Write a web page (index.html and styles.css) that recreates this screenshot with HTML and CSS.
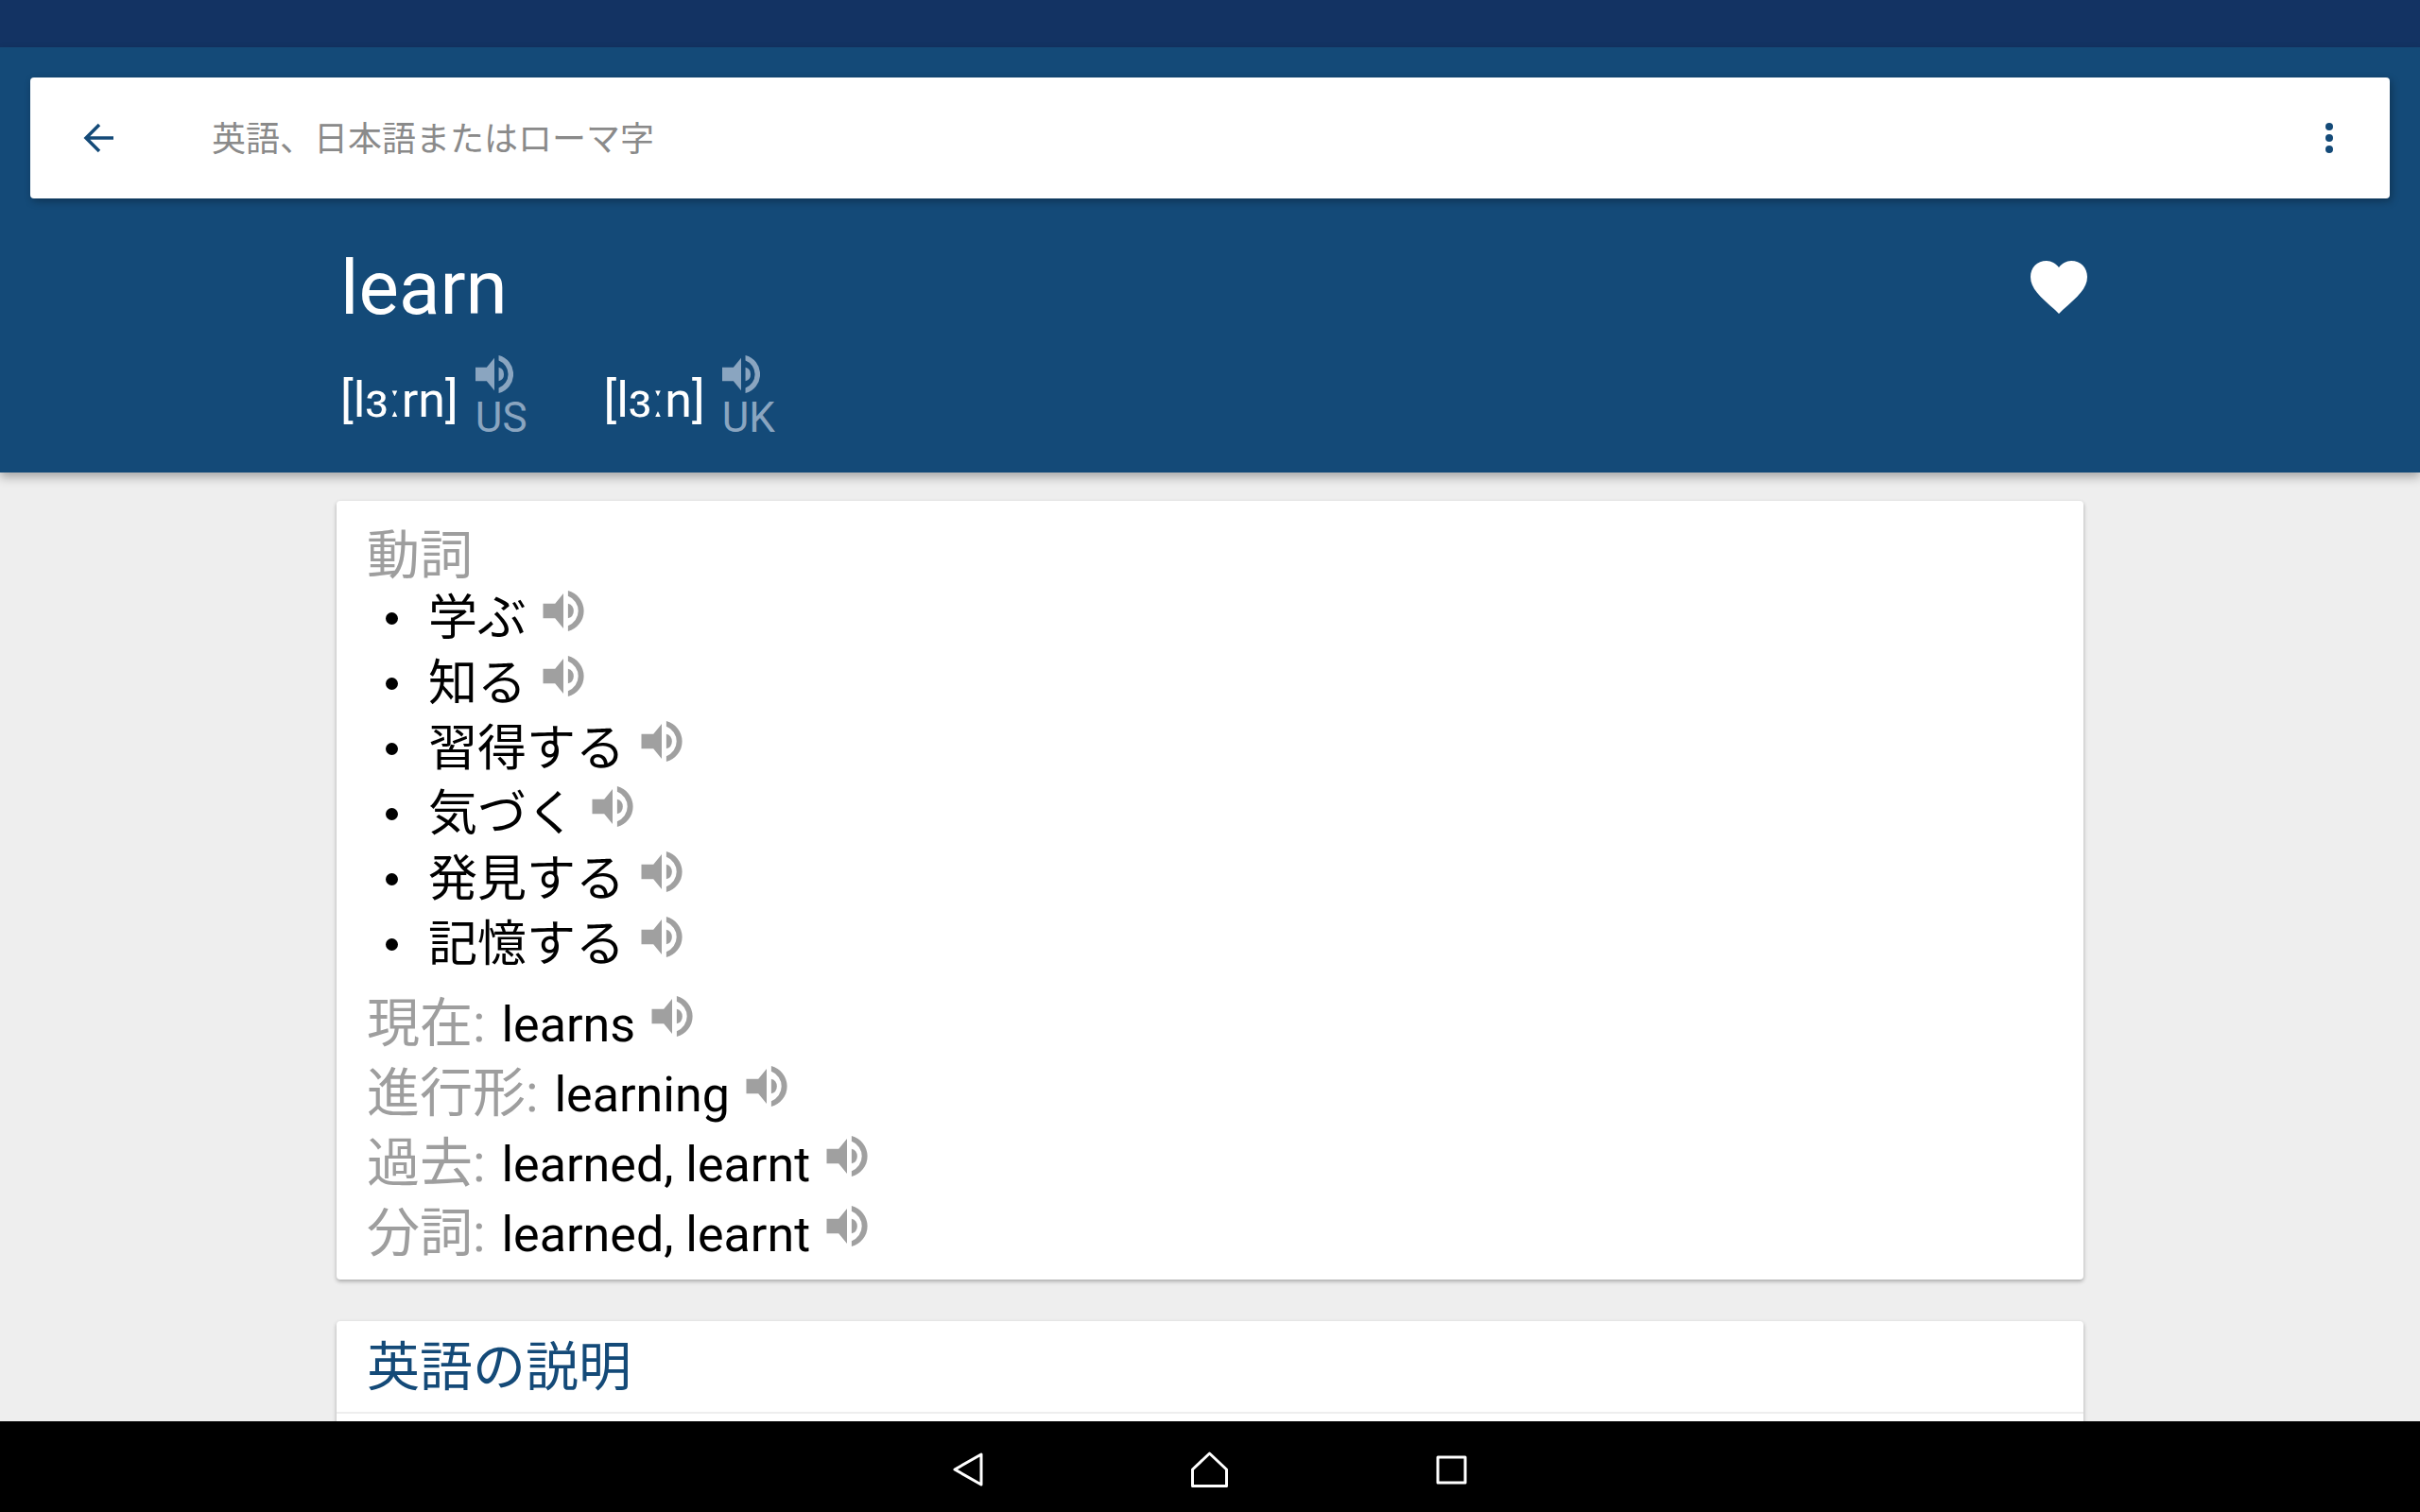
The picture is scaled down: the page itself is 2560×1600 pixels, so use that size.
FILE: index.html
```html
<!DOCTYPE html>
<html lang="ja">
<head>
    <meta charset="UTF-8">
    <title>learn</title>
    <link rel="stylesheet" href="styles.css">
</head>
<body>
    <svg class="defs" width="0" height="0">
        <symbol id="speaker" viewBox="0 0 44 44">
            <path d="M0 14H13L22 3V41L13 30H0Z"/>
            <path d="M27 14A8.3 8.3 0 0 1 27 30Z"/>
            <path d="M27 0A22.7 22.7 0 0 1 27 44V38A17.1 17.1 0 0 0 27 6Z"/>
        </symbol>
    </svg>

    <div class="status-bar"></div>

    <header class="header">
        <div class="search-bar">
            <svg class="back-icon" viewBox="0 0 32 32"><path d="M32 16H3M17 2L3 16L17 30"/></svg>
            <span class="search-hint">英語、日本語またはローマ字</span>
            <div class="menu-dots"><i></i><i></i><i></i></div>
        </div>
        <div class="word-head">
            <div class="word-info">
                <h1 class="word">learn</h1>
                <div class="prons">
                    <div class="pron">
                        <span class="ipa">[lɜːrn]</span>
                        <div class="pron-audio">
                            <svg class="speaker"><use href="#speaker"/></svg>
                            <span>US</span>
                        </div>
                    </div>
                    <div class="pron">
                        <span class="ipa">[lɜːn]</span>
                        <div class="pron-audio">
                            <svg class="speaker"><use href="#speaker"/></svg>
                            <span>UK</span>
                        </div>
                    </div>
                </div>
            </div>
            <svg class="heart" viewBox="0 0 60 56"><path d="M30 56L26 52C10 38 0 29 0 17C0 7 7 0 17 0C22 0 27 3 30 7C33 3 38 0 43 0C53 0 60 7 60 17C60 29 50 38 34 52Z"/></svg>
        </div>
    </header>

    <main class="content">
        <section class="card card-forms">
            <div class="pos">動詞</div>
            <ul class="meanings">
                <li>学ぶ <svg class="speaker"><use href="#speaker"/></svg></li>
                <li>知る <svg class="speaker"><use href="#speaker"/></svg></li>
                <li>習得する <svg class="speaker"><use href="#speaker"/></svg></li>
                <li>気づく <svg class="speaker"><use href="#speaker"/></svg></li>
                <li>発見する <svg class="speaker"><use href="#speaker"/></svg></li>
                <li>記憶する <svg class="speaker"><use href="#speaker"/></svg></li>
            </ul>
            <div class="forms">
                <div class="form"><span class="label">現在:</span> learns <svg class="speaker"><use href="#speaker"/></svg></div>
                <div class="form"><span class="label">進行形:</span> learning <svg class="speaker"><use href="#speaker"/></svg></div>
                <div class="form"><span class="label">過去:</span> learned, learnt <svg class="speaker"><use href="#speaker"/></svg></div>
                <div class="form"><span class="label">分詞:</span> learned, learnt <svg class="speaker"><use href="#speaker"/></svg></div>
            </div>
        </section>
        <section class="card">
            <h2 class="card-title">英語の説明</h2>
        </section>
    </main>

    <nav class="nav-bar">
        <svg class="nav-back" viewBox="0 0 32 36"><path d="M30 2V34L2 18Z"/></svg>
        <svg class="nav-home" viewBox="0 0 39 38"><path d="M19.5 2L37.5 19V36.5H1.5V19Z"/></svg>
        <svg class="nav-recent" viewBox="0 0 33 31"><path d="M2 2H31V29H2Z"/></svg>
    </nav>
</body>
</html>
```
FILE: styles.css
```css
html, body {
    margin: 0;
    padding: 0;
    height: 100%;
}
body {
    width: 2560px;
    height: 1600px;
    overflow: hidden;
    display: flex;
    flex-direction: column;
    background: #eeeeee;
    font-family: Roboto, "Noto Sans CJK JP", sans-serif;
}
.defs {
    display: none;
}
.status-bar {
    height: 50px;
    flex: none;
    background: #133363;
}
.header {
    flex: none;
    height: 450px;
    padding: 32px 32px 0;
    box-sizing: border-box;
    background: #144a78;
    color: #fff;
    box-shadow: 0 5px 10px rgba(0, 0, 0, 0.3);
    position: relative;
}
.search-bar {
    height: 128px;
    display: flex;
    align-items: center;
    padding: 0 60px 0 56px;
    background: #fff;
    border-radius: 4px;
    box-shadow: 2px 3px 8px rgba(0, 0, 0, 0.3);
}
.back-icon {
    width: 32px;
    height: 32px;
    fill: none;
    stroke: #144a78;
    stroke-width: 3.5;
}
.search-hint {
    margin: 0 0 4px 104px;
    flex: 1;
    font-size: 36px;
    color: #8a8a8a;
}
.menu-dots {
    display: flex;
    flex-direction: column;
    gap: 4px;
}
.menu-dots i {
    width: 8px;
    height: 8px;
    border-radius: 50%;
    background: #144a78;
}
.word-head {
    display: flex;
    justify-content: space-between;
    padding: 0 320px 0 328px;
}
.word {
    margin: 50px 0 0;
    font-size: 80px;
    line-height: 90px;
    font-weight: 400;
}
.prons {
    display: flex;
    gap: 81px;
    margin-top: 26px;
}
.pron {
    display: flex;
    align-items: flex-start;
    gap: 18px;
}
.ipa {
    font-size: 52px;
    line-height: 60px;
    margin-top: 18px;
}
.pron-audio {
    display: flex;
    flex-direction: column;
    color: #8aa5c0;
    font-size: 44px;
    line-height: 52px;
}
.pron-audio .speaker {
    display: block;
    width: 40px;
    height: 40px;
    fill: #8aa5c0;
}
.speaker {
    width: 44px;
    height: 43px;
    fill: #a0a0a0;
}
.heart {
    width: 60px;
    height: 56px;
    margin-top: 66px;
    fill: #fff;
}
.content {
    flex: 1;
    min-height: 0;
    overflow: hidden;
    padding: 30px 356px 0;
}
.card {
    background: #fff;
    border-radius: 4px;
    box-shadow: 0 2px 4px rgba(0, 0, 0, 0.3);
    font-size: 52px;
    line-height: 69px;
}
.card-forms {
    height: 798px;
    padding: 26px 32px 0;
    margin-bottom: 44px;
}
.pos {
    font-size: 56px;
    line-height: 64px;
    color: #9e9e9e;
}
.meanings {
    list-style: none;
    margin: 0;
    padding: 0;
}
.meanings li {
    display: flex;
    align-items: center;
    gap: 17px;
}
.meanings li::before {
    content: "";
    width: 13px;
    height: 13px;
    margin: 0 15px 0 20px;
    border-radius: 50%;
    background: #000;
}
.meanings .speaker {
    margin-bottom: 16px;
}
.forms {
    margin-top: 12px;
    line-height: 74px;
}
.form {
    height: 74px;
}
.forms .speaker {
    margin-left: 4px;
    vertical-align: 5px;
}
.label {
    font-size: 56px;
    margin-right: 4px;
    color: #9e9e9e;
}
.card-title {
    height: 98px;
    box-sizing: border-box;
    display: flex;
    align-items: center;
    padding: 2px 32px 0;
    margin: 0;
    border-bottom: 2px solid #eeeeee;
    font-size: 56px;
    line-height: 69px;
    font-weight: 400;
    color: #144a78;
}
.card:last-child {
    height: 200px;
}
.nav-bar {
    flex: none;
    height: 96px;
    box-sizing: border-box;
    padding-top: 6px;
    background: #000;
    display: flex;
    justify-content: center;
    align-items: center;
    gap: 220px;
    position: relative;
}
.nav-bar svg {
    fill: none;
    stroke: #fff;
    stroke-width: 3;
    stroke-linejoin: round;
}
.nav-back {
    width: 32px;
    height: 36px;
}
.nav-home {
    width: 39px;
    height: 38px;
}
.nav-recent {
    width: 33px;
    height: 31px;
}
```
